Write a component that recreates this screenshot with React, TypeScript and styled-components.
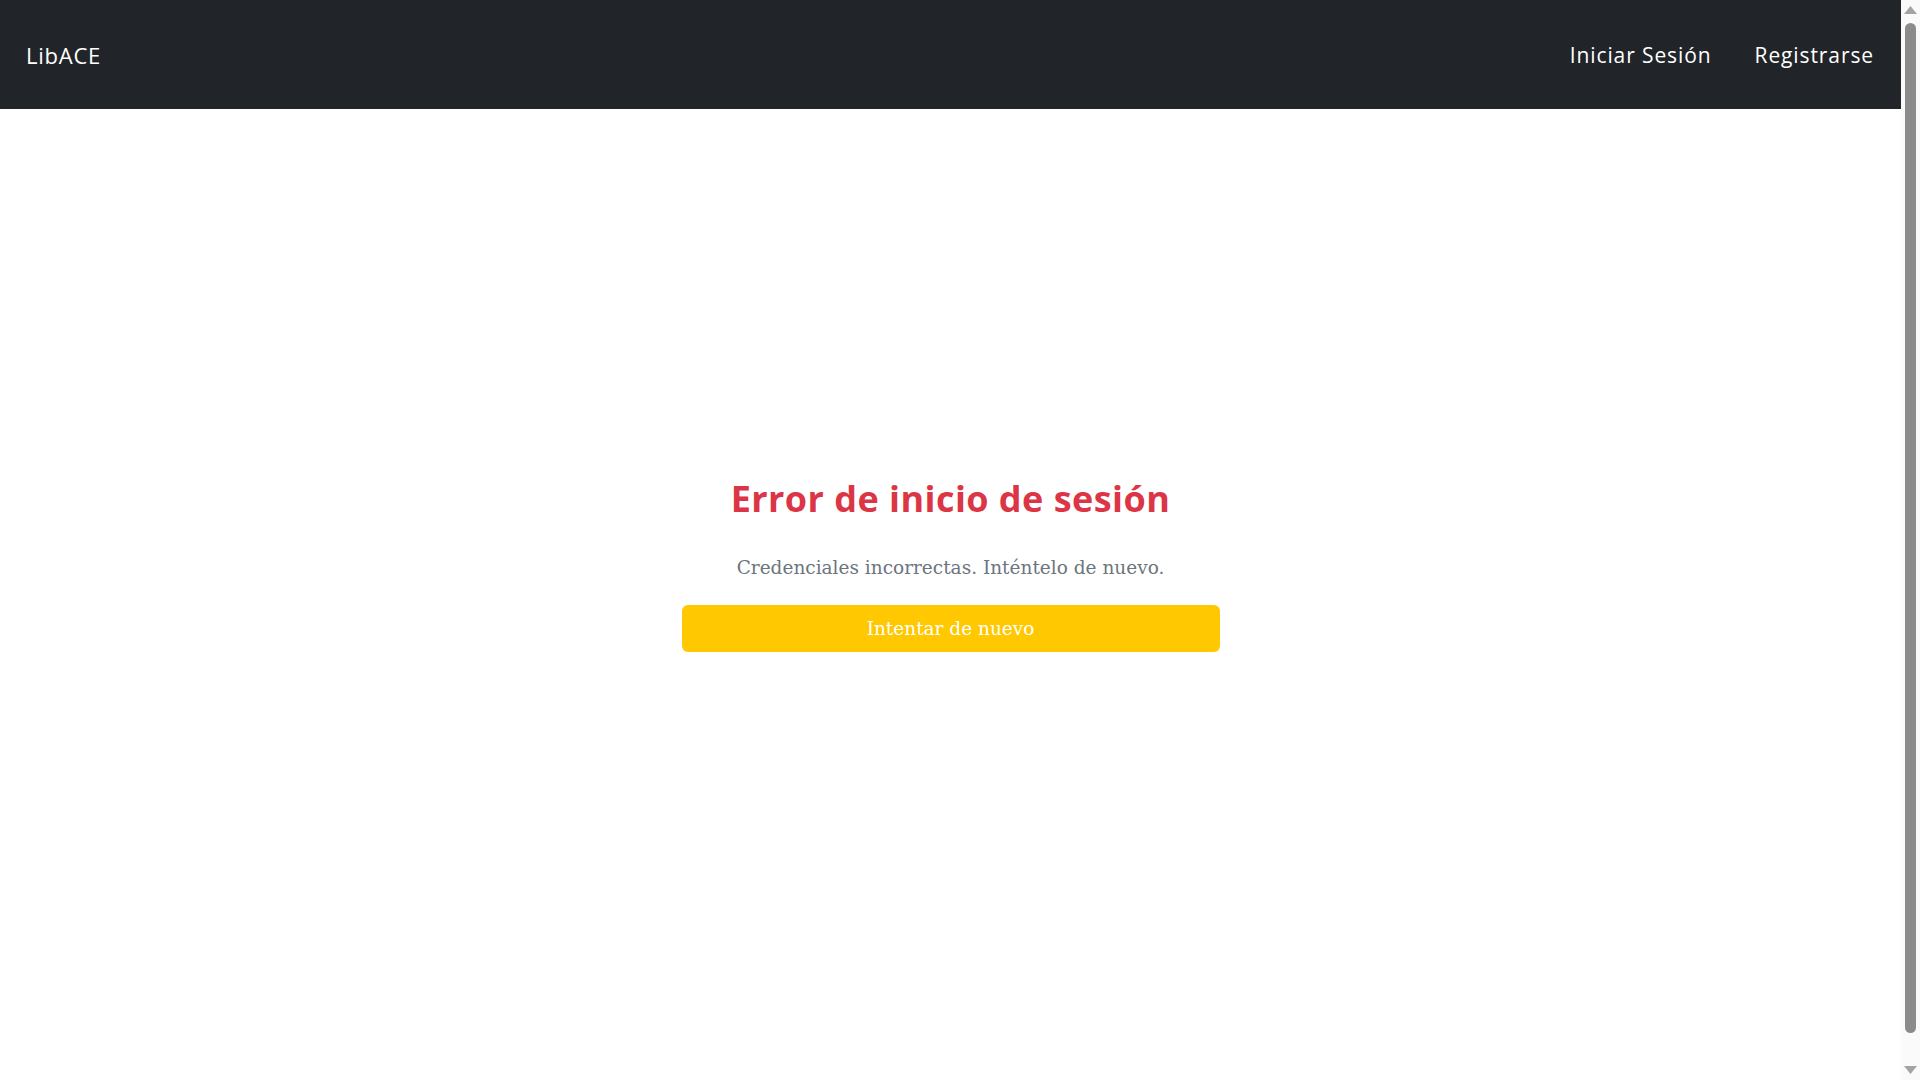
import React from 'react';
import styled, { createGlobalStyle } from 'styled-components';

const GlobalStyle = createGlobalStyle`
  html, body {
    margin: 0;
    padding: 0;
    background: #ffffff;
    overflow: hidden;
  }
  body {
    font-family: "DejaVu Serif", serif;
  }
`;

const Shell = styled.div`
  display: flex;
  height: 100vh;
  overflow: hidden;
`;

const Page = styled.div`
  flex: 1;
  min-width: 0;
  display: flex;
  flex-direction: column;
`;

const NavBar = styled.nav`
  height: 109px;
  flex-shrink: 0;
  background: #212529;
  display: flex;
  align-items: center;
  justify-content: space-between;
  padding: 0 27px 0 26px;
  box-sizing: border-box;
  font-family: "Open Sans", "DejaVu Sans", sans-serif;
`;

const Brand = styled.a`
  color: #ffffff;
  font-size: 22px;
  letter-spacing: 0.75px;
  text-decoration: none;
`;

const NavLinks = styled.div`
  display: flex;
  gap: 43px;
`;

const NavLink = styled.a`
  color: #ffffff;
  font-size: 21px;
  letter-spacing: 0.9px;
  text-decoration: none;
`;

const Main = styled.main`
  flex: 1;
  display: flex;
  flex-direction: column;
  align-items: center;
  padding-top: 368px;
`;

const Card = styled.div`
  width: 538px;
  display: flex;
  flex-direction: column;
  align-items: center;
`;

const Title = styled.h2`
  margin: 0;
  color: #dc3545;
  font-family: "Open Sans", "DejaVu Sans", sans-serif;
  font-weight: 700;
  font-size: 36px;
  line-height: 1.2;
  letter-spacing: 0.45px;
`;

const Message = styled.p`
  margin: 34px 0 23px;
  color: #6c757d;
  font-family: "DejaVu Serif", serif;
  font-size: 18.5px;
  line-height: 1.5;
`;

const RetryButton = styled.button`
  width: 100%;
  height: 47px;
  border: none;
  border-radius: 6px;
  background: #ffc800;
  color: #ffffff;
  font-family: "DejaVu Serif", serif;
  font-size: 18.5px;
  padding: 0;
  cursor: pointer;
`;

const ScrollRail = styled.div`
  width: 19px;
  flex-shrink: 0;
  background: #fafafa;
  display: flex;
  flex-direction: column;
  align-items: center;
`;

const ScrollArrow = styled.div`
  height: 20px;
  display: flex;
  align-items: center;
  justify-content: center;
  flex-shrink: 0;
`;

const ScrollThumb = styled.div`
  width: 11px;
  flex: 1;
  margin: 3px 0 27px;
  background: #8b8b8b;
  border-radius: 6px;
`;

function Arrow({ down }: { down?: boolean }) {
  return (
    <svg width="13" height="8" viewBox="0 0 13 8">
      <polygon
        points={down ? '0,0 13,0 6.5,8' : '6.5,0 13,8 0,8'}
        fill="#a3a3a3"
      />
    </svg>
  );
}

export default function App() {
  return (
    <>
      <GlobalStyle />
      <Shell>
        <Page>
          <NavBar>
            <Brand href="#">LibACE</Brand>
            <NavLinks>
              <NavLink href="#">Iniciar Sesión</NavLink>
              <NavLink href="#">Registrarse</NavLink>
            </NavLinks>
          </NavBar>
          <Main>
            <Card>
              <Title>Error de inicio de sesión</Title>
              <Message>Credenciales incorrectas. Inténtelo de nuevo.</Message>
              <RetryButton>Intentar de nuevo</RetryButton>
            </Card>
          </Main>
        </Page>
        <ScrollRail>
          <ScrollArrow>
            <Arrow />
          </ScrollArrow>
          <ScrollThumb />
          <ScrollArrow>
            <Arrow down />
          </ScrollArrow>
        </ScrollRail>
      </Shell>
    </>
  );
}
